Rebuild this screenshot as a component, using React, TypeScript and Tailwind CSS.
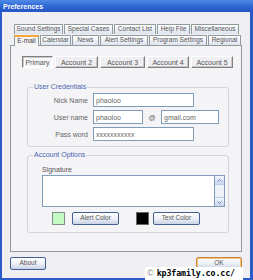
import React from "react";

const font = { fontFamily: '"Liberation Sans", Arial, sans-serif' };

const row1 = [
  { label: "Sound Settings", w: 49 },
  { label: "Special Cases", w: 49 },
  { label: "Contact List", w: 42 },
  { label: "Help File", w: 33 },
  { label: "Miscellaneous", w: 48 },
];

const row2 = [
  { label: "E-mail", w: 25 },
  { label: "Calendar", w: 31 },
  { label: "News", w: 27 },
  { label: "Alert Settings", w: 48 },
  { label: "Program Settings", w: 58 },
  { label: "Regional", w: 33 },
];

const accounts = [
  { label: "Primary", w: 31 },
  { label: "Account 2", w: 43 },
  { label: "Account 3", w: 45 },
  { label: "Account 4", w: 42 },
  { label: "Account 5", w: 42 },
];

function Tab({ label, w, active }: { label: string; w: number; active?: boolean }) {
  return (
    <div
      style={{ width: w }}
      className={
        active
          ? "h-[11px] -mb-px z-10 flex items-center justify-center border border-b-0 border-[#919b9c] border-t-2 border-t-[#f2a83a] bg-[#f4f3f6] text-[6.5px] leading-none text-[#444]"
          : "h-[10px] mt-auto flex items-center justify-center border border-b-0 border-[#919b9c] rounded-t-[1px] bg-gradient-to-b from-white to-[#dde3ee] text-[6.5px] leading-none text-[#555]"
      }
    >
      {label}
    </div>
  );
}

function XPButton({ label, w, focus }: { label: string; w: number; focus?: boolean }) {
  return (
    <div
      style={{ width: w }}
      className={
        "h-[13px] flex items-center justify-center rounded-[2px] border text-[6.5px] leading-none text-[#555] bg-gradient-to-b from-white via-[#eef0f6] to-[#c9d3e6] " +
        (focus ? "border-[#c9853a] shadow-[inset_0_0_0_1px_#f4c47c]" : "border-[#41608f]")
      }
    >
      {label}
    </div>
  );
}

function Field({ value, w }: { value: string; w: number }) {
  return (
    <div
      style={{ width: w }}
      className="h-[14px] border border-[#7f9db9] bg-white px-[2px] flex items-center text-[7px] leading-none text-[#666]"
    >
      {value}
    </div>
  );
}

function Group({ title, children, cls }: { title: string; children: React.ReactNode; cls: string }) {
  return (
    <div className={"relative w-[202px] rounded-[3px] border border-[#d5d4d8] " + cls}>
      <div className="absolute -top-[5px] left-[5px] bg-[#f4f3f6] px-[1px] text-[7px] leading-none text-[#4a64b0]">
        {title}
      </div>
      {children}
    </div>
  );
}

export default function App() {
  return (
    <div style={font} className="relative w-[253px] h-[280px] flex flex-col bg-[#2a5bc8] overflow-hidden">
      <div className="h-[12px] shrink-0 flex items-center pl-[3px] bg-gradient-to-b from-[#4f8ae6] via-[#2f66d3] to-[#2457c2] text-white text-[7px] font-bold leading-none">
        Preferences
      </div>
      <div className="flex-1 ml-[2px] mr-[3px] mb-[2px] bg-[#efeef2] flex flex-col">
        <div className="ml-[12px] mt-[12px] flex gap-px">
          {row1.map((t) => (
            <Tab key={t.label} label={t.label} w={t.w} />
          ))}
        </div>
        <div className="ml-[12px] flex gap-px h-[11px] items-end">
          {row2.map((t, i) => (
            <Tab key={t.label} label={t.label} w={t.w} active={i === 0} />
          ))}
        </div>
        <div className="ml-[8px] w-[232px] h-[207px] border border-[#919b9c] bg-[#f4f3f6] flex flex-col">
          <div className="ml-[11px] mt-[10px] flex gap-[2px]">
            {accounts.map((a, i) => (
              <div
                key={a.label}
                style={{ width: a.w }}
                className={
                  "h-[12px] flex items-center justify-center text-[7px] leading-none text-[#555] border " +
                  (i === 0
                    ? "border-t-[#808080] border-l-[#808080] border-r-white border-b-white bg-[#f7f7f9] shadow-[inset_1px_1px_0_#c8c8c8]"
                    : "border-t-white border-l-white border-r-[#808080] border-b-[#808080] bg-[#efeef2] shadow-[inset_-1px_-1px_0_#c8c8c8]")
                }
              >
                {a.label}
              </div>
            ))}
          </div>

          <Group title="User Credentials" cls="ml-[16px] mt-[19px] h-[60px]">
            <div className="mt-[5px] grid grid-cols-[60px_auto] gap-x-[5px] gap-y-[3px] items-center text-[7px] leading-none text-[#666]">
              <div className="text-right">Nick Name</div>
              <Field value="phaoloo" w={101} />
              <div className="text-right">User name</div>
              <div className="flex items-center">
                <Field value="phaoloo" w={50} />
                <div className="w-[18px] text-center text-[#666]">@</div>
                <Field value="gmail.com" w={58} />
              </div>
              <div className="text-right">Pass word</div>
              <Field value="xxxxxxxxxxx" w={101} />
            </div>
          </Group>

          <Group title="Account Options" cls="ml-[16px] mt-[8px] h-[78px]">
            <div className="ml-[14px] mt-[10px] text-[7px] leading-none text-[#555]">Signature</div>
            <div className="ml-[14px] mt-[2px] flex">
              <div className="w-[172px] h-[32px] border border-[#7f9db9] border-r-0 bg-white" />
              <div className="w-[11px] h-[32px] border border-[#7f9db9] bg-[#eef1f8] flex flex-col justify-between">
                <div className="h-[9px] bg-gradient-to-b from-[#f3f6fd] to-[#c9d6ef] border-b border-[#bccbea] flex items-center justify-center">
                  <svg width="5" height="3" viewBox="0 0 5 3">
                    <path d="M0.5 2.5 L2.5 0.5 L4.5 2.5" fill="none" stroke="#6a85c0" strokeWidth="1" />
                  </svg>
                </div>
                <div className="h-[9px] bg-gradient-to-b from-[#f3f6fd] to-[#c9d6ef] border-t border-[#bccbea] flex items-center justify-center">
                  <svg width="5" height="3" viewBox="0 0 5 3">
                    <path d="M0.5 0.5 L2.5 2.5 L4.5 0.5" fill="none" stroke="#6a85c0" strokeWidth="1" />
                  </svg>
                </div>
              </div>
            </div>
            <div className="ml-[24px] mt-[5px] flex items-center">
              <div className="w-[13px] h-[13px] border border-[#7f8f86] bg-[#c4fbc4]" />
              <div className="ml-[7px]">
                <XPButton label="Alert Color" w={47} />
              </div>
              <div className="ml-[17px] w-[13px] h-[13px] border border-[#666] bg-black" />
              <div className="ml-[4px]">
                <XPButton label="Text Color" w={47} />
              </div>
            </div>
          </Group>
        </div>
        <div className="mt-[5px] ml-[8px] flex justify-between w-[232px]">
          <XPButton label="About" w={36} />
          <XPButton label="OK" w={46} focus />
        </div>
      </div>
      <div className="absolute right-[10px] bottom-0 w-[98px] h-[13px] bg-white flex items-center">
        <span className="ml-[2px] text-[9px] leading-none text-[#888]">©</span>
        <span
          style={{ fontFamily: '"DejaVu Sans Mono", "Liberation Mono", monospace' }}
          className="ml-[3px] text-[8.3px] font-bold leading-none text-black tracking-[-0.1px]"
        >
          kp3family.co.cc/
        </span>
      </div>
    </div>
  );
}
